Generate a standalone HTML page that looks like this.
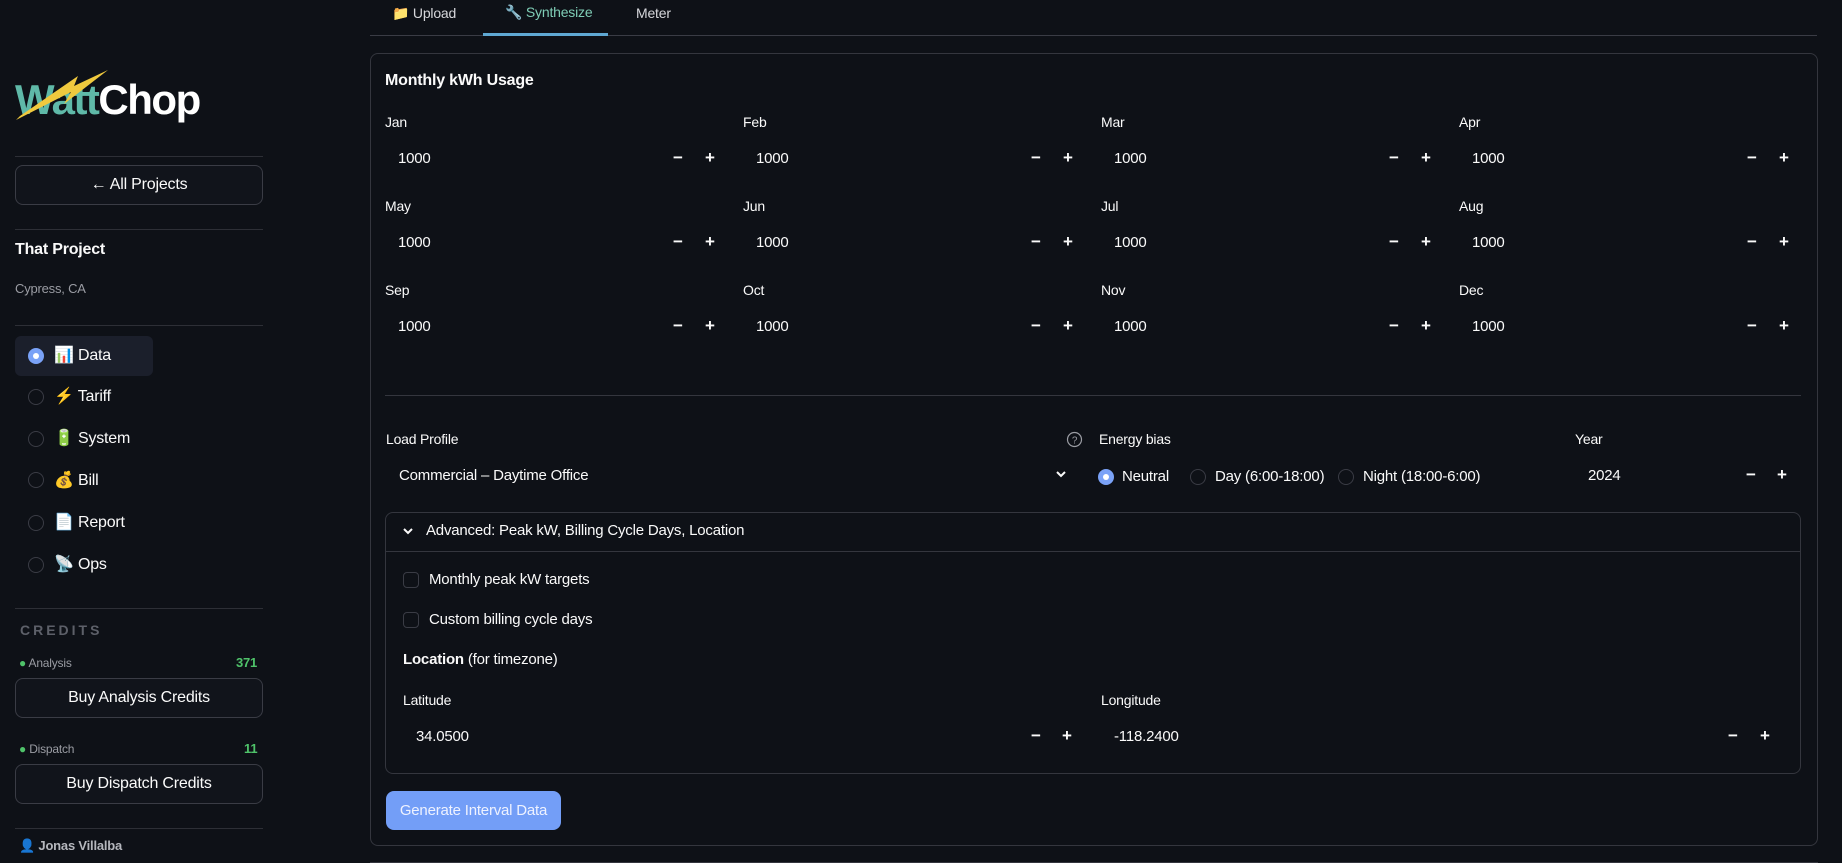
<!DOCTYPE html>
<html><head><meta charset="utf-8"><style>
*{box-sizing:border-box;margin:0;padding:0}
body{width:1842px;height:863px;background:#0e1117;color:#fafafa;font-family:"Liberation Sans",sans-serif;position:relative;overflow:hidden;letter-spacing:-0.2px}
.a{position:absolute;line-height:20px;white-space:nowrap}
.lbl{font-size:14px}
.val{font-size:15px}
.pm{font-size:17px;font-weight:bold}
.hr{position:absolute;height:1px;background:#2d2f36}
.btn{position:absolute;border:1px solid #3a3c45;border-radius:8px;background:#11141b;font-size:16px;text-align:center;color:#fafafa}
.rad{position:absolute;width:16px;height:16px;border-radius:50%;border:1px solid #3a3c45}
.radon{position:absolute;width:16px;height:16px;border-radius:50%;background:#7aa2f7}
.radon::after{content:"";position:absolute;left:5px;top:5px;width:6px;height:6px;border-radius:50%;background:#fff}
.cb{position:absolute;width:16px;height:16px;border-radius:4px;border:1px solid #3a3c45}
</style></head><body>
<!-- sidebar -->
<div class="a" style="left:15px;top:70px;font-size:42px;font-weight:bold;line-height:60px;letter-spacing:-1.5px"><span style="color:#5fb9a8">Watt</span><span style="color:#fff">Chop</span></div>
<svg style="position:absolute;left:16px;top:70px" width="95" height="52"><polygon points="0,50 55,22 48,34 92,0 58,16 62,6 4,46" fill="#f0c93e"/></svg>
<div class="hr" style="left:15px;top:156px;width:248px"></div>
<div class="btn" style="left:15px;top:165px;width:248px;height:40px;line-height:38px">&larr; All Projects</div>
<div class="hr" style="left:15px;top:229px;width:248px"></div>
<div class="a" style="left:15px;top:240px;font-size:16px;font-weight:bold">That Project</div>
<div class="a" style="left:15px;top:279px;font-size:13px;color:#9a9ca3">Cypress, CA</div>
<div class="hr" style="left:15px;top:325px;width:248px"></div>
<div style="position:absolute;left:15px;top:336px;width:138px;height:40px;border-radius:6px;background:#1b1f2b"></div>
<div class="radon" style="left:28px;top:348px"></div>
<div class="a" style="left:54px;top:346px;font-size:16px">📊 Data</div>
<div class="rad" style="left:28px;top:389px"></div><div class="a" style="left:54px;top:387px;font-size:16px"><span style="color:#e8804a">⚡</span> Tariff</div>
<div class="rad" style="left:28px;top:431px"></div><div class="a" style="left:54px;top:429px;font-size:16px">🔋 System</div>
<div class="rad" style="left:28px;top:472px"></div><div class="a" style="left:54px;top:471px;font-size:16px">💰 Bill</div>
<div class="rad" style="left:28px;top:515px"></div><div class="a" style="left:54px;top:513px;font-size:16px">📄 Report</div>
<div class="rad" style="left:28px;top:557px"></div><div class="a" style="left:54px;top:555px;font-size:16px">📡 Ops</div>
<div class="hr" style="left:15px;top:608px;width:248px"></div>
<div class="a" style="left:20px;top:620px;font-size:14px;font-weight:bold;color:#5d6069;letter-spacing:3px">CREDITS</div>
<div class="a" style="left:19px;top:653px;font-size:12px;color:#9a9ca3"><span style="color:#4fc36a">●</span> Analysis</div>
<div class="a" style="left:236px;top:653px;font-size:13px;font-weight:bold;color:#4fc36a">371</div>
<div class="btn" style="left:15px;top:678px;width:248px;height:40px;line-height:38px">Buy Analysis Credits</div>
<div class="a" style="left:19px;top:739px;font-size:12px;color:#9a9ca3"><span style="color:#4fc36a">●</span> Dispatch</div>
<div class="a" style="left:244px;top:739px;font-size:13px;font-weight:bold;color:#4fc36a">11</div>
<div class="btn" style="left:15px;top:764px;width:248px;height:40px;line-height:38px">Buy Dispatch Credits</div>
<div class="hr" style="left:15px;top:828px;width:248px"></div>
<div class="a" style="left:19px;top:836px;font-size:13px;font-weight:bold;color:#b5b7bd"><span style="color:#6a4a9a">👤</span> Jonas Villalba</div>
<!-- tabs -->
<div class="a" style="left:392px;top:3px;font-size:14px;color:#d6d7db">📁 Upload</div>
<div class="a" style="left:505px;top:2px;font-size:14px;color:#7fcdb6">🔧 Synthesize</div>
<div class="a" style="left:636px;top:3px;font-size:14px;color:#d6d7db">Meter</div>
<div class="hr" style="left:370px;top:35px;width:1447px;background:#3a3c45"></div>
<div style="position:absolute;left:483px;top:33px;width:125px;height:3px;background:#5fa8d3"></div>
<!-- container -->
<div style="position:absolute;left:370px;top:53px;width:1448px;height:793px;border:1px solid #34363e;border-radius:8px"></div>
<div class="a" style="left:385px;top:71px;font-size:16px;font-weight:bold">Monthly kWh Usage</div>

<div class="a lbl" style="left:385px;top:112px">Jan</div><div class="a val" style="left:398px;top:149px">1000</div><div class="a pm" style="left:673px;top:148px">−</div><div class="a pm" style="left:705px;top:148px">+</div>
<div class="a lbl" style="left:743px;top:112px">Feb</div><div class="a val" style="left:756px;top:149px">1000</div><div class="a pm" style="left:1031px;top:148px">−</div><div class="a pm" style="left:1063px;top:148px">+</div>
<div class="a lbl" style="left:1101px;top:112px">Mar</div><div class="a val" style="left:1114px;top:149px">1000</div><div class="a pm" style="left:1389px;top:148px">−</div><div class="a pm" style="left:1421px;top:148px">+</div>
<div class="a lbl" style="left:1459px;top:112px">Apr</div><div class="a val" style="left:1472px;top:149px">1000</div><div class="a pm" style="left:1747px;top:148px">−</div><div class="a pm" style="left:1779px;top:148px">+</div>

<div class="a lbl" style="left:385px;top:196px">May</div><div class="a val" style="left:398px;top:233px">1000</div><div class="a pm" style="left:673px;top:232px">−</div><div class="a pm" style="left:705px;top:232px">+</div>
<div class="a lbl" style="left:743px;top:196px">Jun</div><div class="a val" style="left:756px;top:233px">1000</div><div class="a pm" style="left:1031px;top:232px">−</div><div class="a pm" style="left:1063px;top:232px">+</div>
<div class="a lbl" style="left:1101px;top:196px">Jul</div><div class="a val" style="left:1114px;top:233px">1000</div><div class="a pm" style="left:1389px;top:232px">−</div><div class="a pm" style="left:1421px;top:232px">+</div>
<div class="a lbl" style="left:1459px;top:196px">Aug</div><div class="a val" style="left:1472px;top:233px">1000</div><div class="a pm" style="left:1747px;top:232px">−</div><div class="a pm" style="left:1779px;top:232px">+</div>

<div class="a lbl" style="left:385px;top:280px">Sep</div><div class="a val" style="left:398px;top:317px">1000</div><div class="a pm" style="left:673px;top:316px">−</div><div class="a pm" style="left:705px;top:316px">+</div>
<div class="a lbl" style="left:743px;top:280px">Oct</div><div class="a val" style="left:756px;top:317px">1000</div><div class="a pm" style="left:1031px;top:316px">−</div><div class="a pm" style="left:1063px;top:316px">+</div>
<div class="a lbl" style="left:1101px;top:280px">Nov</div><div class="a val" style="left:1114px;top:317px">1000</div><div class="a pm" style="left:1389px;top:316px">−</div><div class="a pm" style="left:1421px;top:316px">+</div>
<div class="a lbl" style="left:1459px;top:280px">Dec</div><div class="a val" style="left:1472px;top:317px">1000</div><div class="a pm" style="left:1747px;top:316px">−</div><div class="a pm" style="left:1779px;top:316px">+</div>

<div class="hr" style="left:385px;top:395px;width:1416px;background:#34363e"></div>

<div class="a lbl" style="left:386px;top:429px">Load Profile</div>
<div class="a val" style="left:399px;top:466px">Commercial – Daytime Office</div>
<svg style="position:absolute;left:1055px;top:469px" width="12" height="10"><path d="M2 3 L6 7 L10 3" stroke="#fafafa" stroke-width="2" fill="none"/></svg>
<svg style="position:absolute;left:1066px;top:431px" width="17" height="17"><circle cx="8.5" cy="8.5" r="7" stroke="#9a9ca3" stroke-width="1.2" fill="none"/><text x="8.5" y="12.5" font-size="10" fill="#9a9ca3" text-anchor="middle" font-family="Liberation Sans">?</text></svg>
<div class="a lbl" style="left:1099px;top:429px">Energy bias</div>
<div class="radon" style="left:1098px;top:469px"></div><div class="a val" style="left:1122px;top:467px">Neutral</div>
<div class="rad" style="left:1190px;top:469px"></div><div class="a val" style="left:1215px;top:467px">Day (6:00-18:00)</div>
<div class="rad" style="left:1338px;top:469px"></div><div class="a val" style="left:1363px;top:467px">Night (18:00-6:00)</div>
<div class="a lbl" style="left:1575px;top:429px">Year</div>
<div class="a val" style="left:1588px;top:466px">2024</div><div class="a pm" style="left:1746px;top:465px">−</div><div class="a pm" style="left:1777px;top:465px">+</div>

<div style="position:absolute;left:385px;top:512px;width:1416px;height:262px;border:1px solid #34363e;border-radius:8px"></div>
<div class="hr" style="left:386px;top:551px;width:1414px;background:#34363e"></div>
<svg style="position:absolute;left:402px;top:526px" width="12" height="10"><path d="M2 3 L6 7 L10 3" stroke="#fafafa" stroke-width="2" fill="none"/></svg>
<div class="a val" style="left:426px;top:521px">Advanced: Peak kW, Billing Cycle Days, Location</div>
<div class="cb" style="left:403px;top:572px"></div><div class="a val" style="left:429px;top:570px">Monthly peak kW targets</div>
<div class="cb" style="left:403px;top:612px"></div><div class="a val" style="left:429px;top:610px">Custom billing cycle days</div>
<div class="a val" style="left:403px;top:650px"><b>Location</b> (for timezone)</div>
<div class="a lbl" style="left:403px;top:690px">Latitude</div>
<div class="a val" style="left:416px;top:727px">34.0500</div><div class="a pm" style="left:1031px;top:726px">−</div><div class="a pm" style="left:1062px;top:726px">+</div>
<div class="a lbl" style="left:1101px;top:690px">Longitude</div>
<div class="a val" style="left:1114px;top:727px">-118.2400</div><div class="a pm" style="left:1728px;top:726px">−</div><div class="a pm" style="left:1760px;top:726px">+</div>

<div style="position:absolute;left:386px;top:791px;width:175px;height:39px;border-radius:8px;background:#739ef7;color:#eef2ff;font-size:15px;line-height:39px;text-align:center">Generate Interval Data</div>
<div class="hr" style="left:370px;top:862px;width:1448px;background:#34363e"></div>
</body></html>
